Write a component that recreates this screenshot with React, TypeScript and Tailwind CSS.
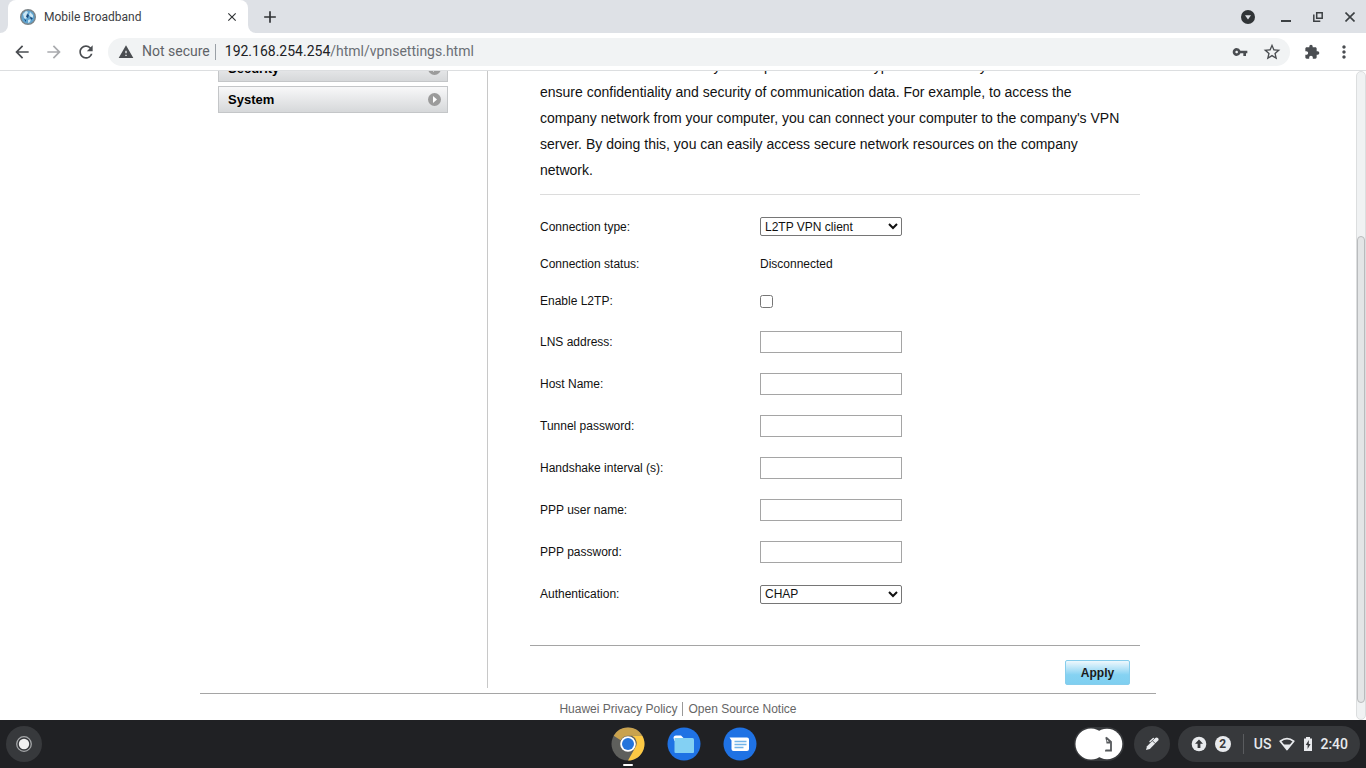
import { useState, type ReactNode } from "react";
import { MdAdd, MdArrowBack, MdArrowForward, MdClose, MdExtension, MdMoreVert, MdRefresh, MdStarBorder, MdVpnKey, MdWarning } from "react-icons/md";

const TEXT_FIELDS = [
	{ id: "lns", label: "LNS address:", type: "text" },
	{ id: "host", label: "Host Name:", type: "text" },
	{ id: "tunnel", label: "Tunnel password:", type: "password" },
	{ id: "handshake", label: "Handshake interval (s):", type: "text" },
	{ id: "ppp-user", label: "PPP user name:", type: "text" },
	{ id: "ppp-password", label: "PPP password:", type: "password" },
];

function GlobeIcon() {
	return (
		<svg viewBox="0 0 16 16" className="size-4 shrink-0" aria-hidden="true">
			<circle cx="8" cy="8" r="7.3" fill="#5fa3cf" stroke="#7d8487" strokeWidth="1.4" />
			<path d="M3 5l3-3 2 1-1 2 1 2-2 3-2-1zM10 3l3 3v3l-2-1-2-2zM8 11l3-1-1 3-2 1z" fill="#cbe6f4" />
			<path d="M7 5l2 1-1 3-2-1zM10 8l3 1-2 2zM4 10l2 1v2z" fill="#17487c" />
		</svg>
	);
}

function TabStrip() {
	return (
		<div className="flex h-[33px] shrink-0 items-end bg-[#dee1e6]">
			<div className="h-full w-2 bg-white">
				<div className="h-full w-full rounded-br-lg bg-[#dee1e6]" />
			</div>
			<div className="flex h-full w-60 items-center rounded-t-lg bg-white pr-2 pl-3">
				<GlobeIcon />
				<span className="ml-2 flex-1 text-[12px] text-[#3c4043]">Mobile Broadband</span>
				<button type="button" aria-label="Close tab" className="flex size-4 items-center justify-center text-[#303336]">
					<MdClose className="size-3.5" />
				</button>
			</div>
			<div className="h-full w-2 bg-white">
				<div className="h-full w-full rounded-bl-lg bg-[#dee1e6]" />
			</div>
			<button type="button" aria-label="New tab" className="ml-1 flex h-full items-center text-[#303336]">
				<MdAdd className="size-5" />
			</button>
			<div className="ml-auto flex h-full items-center gap-[26px] pr-[11px] text-[#3c4043]">
				<button type="button" aria-label="Search tabs">
					<svg viewBox="0 0 14 14" className="size-3.5">
						<circle cx="7" cy="7" r="7" fill="#303437" />
						<path d="M4 5.2h6L7 9.5z" fill="#dee1e6" />
					</svg>
				</button>
				<div className="flex items-center gap-[22px]">
					<button type="button" aria-label="Minimize">
						<svg viewBox="0 0 10 10" className="size-2.5">
							<path d="M0 9h10" stroke="currentColor" strokeWidth="2" />
						</svg>
					</button>
					<button type="button" aria-label="Restore">
						<svg viewBox="0 0 10 10" className="size-2.5" fill="none" stroke="currentColor" strokeWidth="1.5">
							<path d="M3.7 0.8h5.5v5.5H3.7zM0.8 2.5v6.7h6.5" />
						</svg>
					</button>
					<button type="button" aria-label="Close window">
						<svg viewBox="0 0 10 10" className="size-2.5" fill="none" stroke="currentColor" strokeWidth="1.6">
							<path d="M0.5 0.5l9 9M9.5 0.5l-9 9" />
						</svg>
					</button>
				</div>
			</div>
		</div>
	);
}

function Toolbar() {
	return (
		<div className="flex h-[38px] shrink-0 items-center border-b border-[#dcdee0] bg-white px-3 text-[#4a4d51]">
			<div className="flex gap-3">
				<button type="button" aria-label="Back">
					<MdArrowBack className="size-5" />
				</button>
				<button type="button" aria-label="Forward" className="text-[#a9abae]">
					<MdArrowForward className="size-5" />
				</button>
				<button type="button" aria-label="Reload">
					<MdRefresh className="size-5" />
				</button>
			</div>
			<div className="ml-3 flex h-7 flex-1 items-center rounded-full bg-[#f1f3f4] pr-2 pl-2.5 text-[14px]">
				<MdWarning className="size-4" />
				<span className="ml-2 text-[#5f6368]">Not secure</span>
				<span className="mr-[9px] ml-[5px] h-4 w-px bg-[#9aa0a6]" />
				<div role="textbox" aria-label="Address" className="flex-1 text-[#202124]">
					192.168.254.254<span className="text-[#6b6f74]">/html/vpnsettings.html</span>
				</div>
				<button type="button" aria-label="Passwords">
					<MdVpnKey className="size-4" />
				</button>
				<button type="button" aria-label="Bookmark" className="ml-3.5">
					<MdStarBorder className="size-5" />
				</button>
			</div>
			<button type="button" aria-label="Extensions" className="ml-3.5">
				<MdExtension className="size-4" />
			</button>
			<button type="button" aria-label="Menu" className="ml-3.5">
				<MdMoreVert className="size-5" />
			</button>
		</div>
	);
}

function MenuItem({ children }: { children: ReactNode }) {
	return (
		<a
			href="#"
			className="flex h-[27px] items-center justify-between border border-[#c4c6c8] bg-linear-to-b from-[#f8f8f9] to-[#d6d8da] pr-1.5 pl-[9px] text-[13px] font-bold text-black"
		>
			{children}
			<svg viewBox="0 0 13 13" className="size-[13px]" aria-hidden="true">
				<circle cx="6.5" cy="6.5" r="6.5" fill="#9b9b9b" />
				<path d="M5 3l4 3.5L5 10z" fill="#fff" />
			</svg>
		</a>
	);
}

function Field({ id, label, className, children }: { id?: string; label: string; className: string; children: ReactNode }) {
	return (
		<div className={`flex items-center ${className}`}>
			<label htmlFor={id} className="w-[220px]">
				{label}
			</label>
			{children}
		</div>
	);
}

function VpnForm() {
	const [connection, setConnection] = useState("L2TP VPN client");
	const [auth, setAuth] = useState("CHAP");

	return (
		<form className="text-[12px]" onSubmit={(e) => e.preventDefault()}>
			<div className="pt-[13px] pb-[30px] pl-2.5">
				<Field id="connection" label="Connection type:" className="h-[37px]">
					<select
						id="connection"
						value={connection}
						onChange={(e) => setConnection(e.target.value)}
						className="h-[19px] w-[142px] rounded-xs border border-[#767676] bg-white"
					>
						<option>L2TP VPN client</option>
						<option>PPTP VPN client</option>
					</select>
				</Field>
				<Field label="Connection status:" className="h-[37px]">
					<span>Disconnected</span>
				</Field>
				<Field id="enable" label="Enable L2TP:" className="h-[38px]">
					<input id="enable" type="checkbox" className="size-[13px]" />
				</Field>
				<div className="pt-px">
					{TEXT_FIELDS.map((f) => (
						<Field key={f.id} id={f.id} label={f.label} className="h-[42px]">
							<input id={f.id} type={f.type} className="h-[22px] w-[142px] border border-[#a5a5a5] px-1" />
						</Field>
					))}
				</div>
				<Field id="auth" label="Authentication:" className="h-[42px]">
					<select
						id="auth"
						value={auth}
						onChange={(e) => setAuth(e.target.value)}
						className="h-[19px] w-[142px] rounded-xs border border-[#767676] bg-white"
					>
						<option>CHAP</option>
						<option>PAP</option>
					</select>
				</Field>
			</div>
			<div className="flex justify-end border-t border-[#a5a5a5] pt-3.5 pr-2.5">
				<button
					type="submit"
					className="h-[25px] w-[65px] rounded-xs border border-[#86cdec] bg-linear-to-b from-[#eef8fd] via-[#85d2f2] via-60% to-[#7fcff0] text-[12px] font-bold text-[#1a1a1a]"
				>
					Apply
				</button>
			</div>
		</form>
	);
}

function Page() {
	return (
		<div className="flex min-h-0 flex-1">
			<main className="flex flex-1 flex-col justify-end overflow-hidden bg-white text-[#111]">
				<div className="mx-auto w-full max-w-[956px]">
					<div className="flex pb-[5px]">
						<nav className="flex w-72 shrink-0 flex-col gap-1 border-r border-[#c8c8c8] pt-3 pr-[39px] pl-[18px]">
							<MenuItem>Security</MenuItem>
							<MenuItem>System</MenuItem>
						</nav>
						<section className="flex-1 pr-4 pb-[3px] pl-[42px]">
							<p className="ml-2.5 border-b border-[#dcdcdc] pt-2.5 pb-[11px] text-[14px] leading-[26px]">
								A VPN network adds security which protects with encryption and identity to
								<br />
								ensure confidentiality and security of communication data. For example, to access the
								<br />
								company network from your computer, you can connect your computer to the company's VPN
								<br />
								server. By doing this, you can easily access secure network resources on the company
								<br />
								network.
							</p>
							<VpnForm />
						</section>
					</div>
					<footer className="flex h-[27px] items-center justify-center border-t border-[#a5a5a5] pt-1 text-[12px] leading-[14px] text-[#666]">
						<a href="#" className="border-r border-[#999] pr-[5px]">
							Huawei Privacy Policy
						</a>
						<a href="#" className="pl-[5px]">
							Open Source Notice
						</a>
					</footer>
				</div>
			</main>
			<div className="flex w-2.5 shrink-0 flex-col justify-end rounded-full border border-[#dcdedf] bg-[#f0f2f3] pb-4">
				<div className="h-[467px] rounded-full border border-[#b9bbbd] bg-[#e3e5e6]" />
			</div>
		</div>
	);
}

function ChromeIcon() {
	return (
		<svg viewBox="0 0 34 34" className="size-[34px]">
			<circle cx="17" cy="17" r="16.5" fill="#5e5f5c" />
			<path d="M2.7 8.8A16.5 16.5 0 0 1 31.3 8.8H17a8 8 0 0 0-7.3 4.5z" fill="#c9a24e" />
			<path d="M31.3 8.8A16.5 16.5 0 0 1 17 33.5L24 21a8 8 0 0 0-3-12.2z" fill="#fdc944" />
			<circle cx="17" cy="17" r="7.8" fill="#fff" />
			<circle cx="17" cy="17" r="6" fill="#2374dc" />
		</svg>
	);
}

function Shelf() {
	return (
		<footer className="flex h-12 shrink-0 items-center bg-[#202124] px-1.5 text-[#e8eaed]">
			<div className="flex flex-1">
				<button type="button" aria-label="Launcher" className="flex size-9 items-center justify-center rounded-full bg-[#37393c]">
					<svg viewBox="0 0 16 16" className="size-4">
						<circle cx="8" cy="8" r="7.3" fill="none" stroke="#a5a7a9" strokeWidth="1.3" />
						<circle cx="8" cy="8" r="5.2" fill="#f1f1f1" />
					</svg>
				</button>
			</div>
			<div className="flex gap-[22px] pl-0.5">
				<button type="button" aria-label="Chrome" className="relative">
					<ChromeIcon />
					<span className="absolute top-[37px] left-3 h-0.5 w-2.5 rounded-full bg-white" />
				</button>
				<button type="button" aria-label="Files">
					<svg viewBox="0 0 34 34" className="size-[34px]">
						<circle cx="17" cy="17" r="16.5" fill="#1f72e4" />
						<path d="M6.5 11a2.5 2.5 0 0 1 2.5-2.5h5l2.5 2.5v3h-9z" fill="#fff" />
						<path d="M7.5 11h18a1.5 1.5 0 0 1 1.5 1.5V25a1 1 0 0 1-1 1H8.5a1 1 0 0 1-1-1z" fill="#83d0f3" />
					</svg>
				</button>
				<button type="button" aria-label="Messages">
					<svg viewBox="0 0 34 34" className="size-[34px]">
						<circle cx="17" cy="17" r="16.5" fill="#1f72e4" />
						<path d="M6.5 10.5H24a2 2 0 0 1 2 2V22a2 2 0 0 1-2 2H10.5a2 2 0 0 1-2-2v-8.5z" fill="#fff" />
						<path d="M11.5 14.5h12M11.5 17.5h12M11.5 20.5h9" stroke="#72b4e8" strokeWidth="1.5" />
					</svg>
				</button>
			</div>
			<div className="flex flex-1 items-center justify-end">
				<button type="button" aria-label="Recent files">
					<svg viewBox="0 0 50 34" className="h-[34px] w-[50px]">
						<rect width="50" height="34" rx="17" fill="#37393c" />
						<circle cx="33" cy="17" r="15.3" fill="#fff" />
						<path d="M32 10.5l5 4.5v8.5h-6M32 10.5v5h4" fill="none" stroke="#55585b" strokeWidth="1.8" />
						<circle cx="17" cy="17" r="15.5" fill="#fff" />
					</svg>
				</button>
				<button type="button" aria-label="Stylus tools" className="ml-2.5 flex size-9 items-center justify-center rounded-full bg-[#37393c]">
					<svg viewBox="0 0 14 14" className="size-3.5" fill="none" stroke="currentColor">
						<path d="M1 13l1-3.8L7.3 4 10 6.7 4.8 12z" fill="currentColor" stroke="none" />
						<path d="M9 5l2.6-2.6" strokeWidth="3.8" strokeLinecap="round" />
						<path d="M5 4.5l3.3-3" strokeWidth="1.4" strokeLinecap="round" />
						<path d="M7.5 3.8l2.7 2.7" stroke="#37393c" strokeWidth="0.8" />
					</svg>
				</button>
				<button type="button" className="ml-2 flex h-9 items-center rounded-full bg-[#37393c] pr-3 pl-[13px] text-[14px] font-medium">
					<svg viewBox="0 0 16 16" className="size-4">
						<circle cx="8" cy="8" r="7.3" fill="currentColor" />
						<path d="M8 3.5l4 4.2H9.4V12H6.6V7.7H4z" fill="#37393c" />
					</svg>
					<span className="ml-2 flex size-4 items-center justify-center rounded-full bg-[#e8eaed] text-[12px] leading-4 font-bold text-[#37393c]">
						2
					</span>
					<span className="mr-2.5 ml-3 h-5 w-px bg-[#5a5c5f]" />
					US
					<svg viewBox="0 0 16 14" className="ml-2 h-3.5 w-4">
						<path d="M1.3 4.3Q8-1 14.7 4.3L8 12.5z" fill="none" stroke="currentColor" strokeWidth="1.8" strokeLinejoin="round" />
						<path d="M4 7.5h8l-4 5z" fill="currentColor" />
					</svg>
					<svg viewBox="0 0 8 14" className="ml-[9px] h-3.5 w-2">
						<path d="M0 1.5h2V0h4v1.5h2V14H0z" fill="currentColor" />
						<path d="M4.8 3l-3 5h1.8v4l3-5H4.8z" fill="#37393c" />
					</svg>
					<span className="ml-2">2:40</span>
				</button>
			</div>
		</footer>
	);
}

export default function App() {
	return (
		<div className="flex h-screen flex-col overflow-hidden font-['Liberation_Sans',Arial,sans-serif]">
			<header className="shrink-0 font-[Roboto,sans-serif]">
				<TabStrip />
				<Toolbar />
			</header>
			<Page />
			<div className="shrink-0 font-[Roboto,sans-serif]">
				<Shelf />
			</div>
		</div>
	);
}
